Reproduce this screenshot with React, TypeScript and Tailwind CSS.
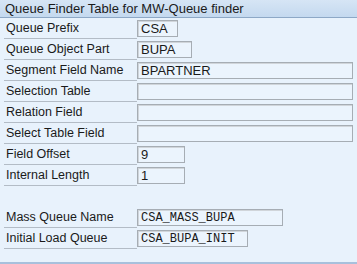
import React from "react";

type Row = { label: string; value: string; w: number; mono?: boolean } | null;

const rows: Row[] = [
  { label: "Queue Prefix", value: "CSA", w: 41 },
  { label: "Queue Object Part", value: "BUPA", w: 55 },
  { label: "Segment Field Name", value: "BPARTNER", w: 216 },
  { label: "Selection Table", value: "", w: 216 },
  { label: "Relation Field", value: "", w: 216 },
  { label: "Select Table Field", value: "", w: 216 },
  { label: "Field Offset", value: "9", w: 48 },
  { label: "Internal Length", value: "1", w: 48 },
  null,
  { label: "Mass Queue Name", value: "CSA_MASS_BUPA", w: 146, mono: true },
  { label: "Initial Load Queue", value: "CSA_BUPA_INIT", w: 111, mono: true },
];

export default function App() {
  return (
    <div
      className="w-[357px] h-[264px] flex flex-col bg-[#e8f2fc] text-[12.5px] text-[#1a1a1a] overflow-hidden"
      style={{ fontFamily: '"Liberation Sans", Arial, sans-serif' }}
    >
      <div className="h-[18px] shrink-0 bg-gradient-to-b from-[#d6e5f5] to-[#c4d9ef] border-b border-[#8da8c6] flex items-center pl-[5px] leading-none text-[13px]">
        Queue Finder Table for MW-Queue finder
      </div>
      <div className="flex-1 flex flex-col">
        {rows.map((r, i) =>
          r === null ? (
            <div key={i} className="h-[21px]" />
          ) : (
            <div key={i} className="h-[21px] flex">
              <div className="w-[133px] ml-[4px] border-b border-[#b3bcc6] flex items-center pl-[2px] pt-[1px] whitespace-nowrap">
                {r.label}
              </div>
              <div
                className="mt-[2px] h-[17px] border border-[#a6adb4] bg-[#ebf4fd] shadow-[inset_1px_1px_0_#d0d5da] flex items-center pl-[3px] leading-none"
                style={{
                  width: r.w,
                  fontFamily: r.mono ? '"Liberation Mono", "Courier New", monospace' : undefined,
                  fontSize: r.mono ? "12px" : "13px",
                }}
              >
                {r.value}
              </div>
            </div>
          )
        )}
      </div>
      <div className="h-[2px] shrink-0 bg-[#a8c0dc]" />
    </div>
  );
}
